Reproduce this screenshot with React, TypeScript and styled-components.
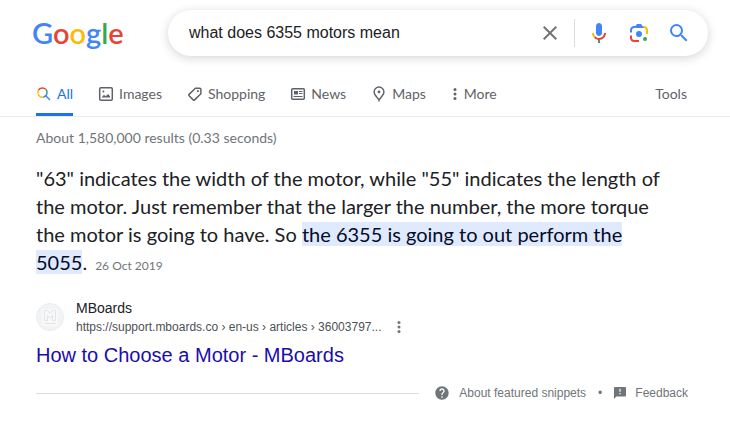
import React from 'react';
import styled, { createGlobalStyle } from 'styled-components';

const GlobalStyle = createGlobalStyle`
  *, *::before, *::after { box-sizing: border-box; }
  body {
    margin: 0;
    background: #fff;
    color: #202124;
    font-family: "Liberation Sans", Arial, sans-serif;
  }
`;

const display = 'Lato, "Open Sans", sans-serif';

const Header = styled.header`
  display: flex;
  align-items: center;
  gap: 44px;
  padding: 10px 22px 0 32px;
`;

const Logo = styled.a`
  width: 92px;
  font: 600 29px/46px ${display};
  text-decoration: none;
`;

const Letter = styled.span<{ $color: string }>`
  color: ${(p) => p.$color};
`;

const SearchBar = styled.form`
  flex: 1;
  min-width: 0;
  height: 46px;
  display: flex;
  align-items: center;
  gap: 16px;
  padding: 0 17px 0 21px;
  border-radius: 23px;
  background: #fff;
  box-shadow: 0 2px 8px 1px rgba(64, 60, 67, 0.18);
`;

const SearchInput = styled.input`
  flex: 1;
  min-width: 0;
  height: 34px;
  padding: 0;
  border: 0;
  outline: 0;
  background: transparent;
  color: #202124;
  font: 16px/24px "Liberation Sans", Arial, sans-serif;
`;

const IconButton = styled.button`
  display: flex;
  flex: none;
  padding: 0;
  border: 0;
  background: transparent;
  color: #70757a;
  cursor: pointer;
`;

const ClearBox = styled.div`
  display: flex;
  align-items: center;
  height: 28px;
  padding-right: 12px;
  margin-right: -4px;
  border-right: 1px solid #dadce0;
`;

const TabBar = styled.nav`
  display: flex;
  justify-content: space-between;
  margin-top: 22px;
  padding: 0 43px 0 36px;
  border-bottom: 1px solid #ebebeb;
  font: 14px/16px ${display};
`;

const TabList = styled.div`
  display: flex;
  gap: 25px;
`;

const Tab = styled.a<{ $active?: boolean }>`
  display: flex;
  align-items: center;
  gap: 5px;
  height: 38px;
  padding-bottom: 4px;
  border-bottom: 3px solid ${(p) => (p.$active ? '#1a73e8' : 'transparent')};
  color: ${(p) => (p.$active ? '#1a73e8' : '#5f6368')};
  text-decoration: none;
  white-space: nowrap;
`;

const Main = styled.main`
  padding: 0 42px 0 36px;
`;

const Stats = styled.div`
  padding-top: 11px;
  color: #70757a;
  font: 14px/20px ${display};
`;

const Snippet = styled.p`
  margin: 16px 0 0;
  max-width: 632px;
  font: 20px/28px ${display};
`;

const Highlight = styled.mark`
  background: #dfeaff;
  color: #040c28;
`;

const DateText = styled.span`
  margin-left: 8px;
  color: #70757a;
  font-size: 12px;
  line-height: 16px;
  white-space: nowrap;
`;

const Source = styled.div`
  display: flex;
  align-items: center;
  gap: 12px;
  margin-top: 22px;
`;

const SourceText = styled.div`
  min-width: 0;
`;

const SiteName = styled.div`
  font-size: 14px;
  line-height: 20px;
`;

const UrlRow = styled.div`
  display: flex;
  align-items: center;
  gap: 14px;
  color: #4d5156;
  font-size: 12px;
  line-height: 18px;
`;

const Title = styled.h3`
  margin: 6px 0 0;
  font-size: 20px;
  font-weight: 400;
  line-height: 26px;

  a {
    color: #1a0dab;
    text-decoration: none;
  }
`;

const Footer = styled.footer`
  display: flex;
  align-items: center;
  margin-top: 17px;
  color: #70757a;
  font-size: 12px;
  line-height: 16px;
`;

const Rule = styled.hr`
  flex: 1;
  margin: 0 15px 0 0;
  border: 0;
  border-top: 1px solid #dadce0;
`;

const FooterLink = styled.a`
  display: flex;
  align-items: center;
  gap: 9px;
  color: inherit;
  text-decoration: none;
`;

const Bullet = styled.span`
  margin: 0 12px;
`;

const wordmark: [string, string][] = [
  ['G', '#4285f4'],
  ['o', '#ea4335'],
  ['o', '#fbbc05'],
  ['g', '#4285f4'],
  ['l', '#34a853'],
  ['e', '#ea4335'],
];

const ClearIcon = () => (
  <svg width="24" height="24" viewBox="0 0 24 24" fill="currentColor" aria-hidden>
    <path d="M19 6.41L17.59 5 12 10.59 6.41 5 5 6.41 10.59 12 5 17.59 6.41 19 12 13.41 17.59 19 19 17.59 13.41 12z" />
  </svg>
);

const MicIcon = () => (
  <svg width="24" height="24" viewBox="0 0 24 24" aria-hidden>
    <path fill="#4285f4" d="m12 15c1.66 0 3-1.31 3-2.97v-7.02c0-1.66-1.34-3.01-3-3.01s-3 1.34-3 3.01v7.02c0 1.66 1.34 2.97 3 2.97z" />
    <path fill="#34a853" d="m11 18.08h2v3.92h-2z" />
    <path fill="#fbbc05" d="m7.05 16.87c-1.27-1.33-2.05-2.83-2.05-4.87h2c0 1.45 0.56 2.42 1.47 3.38v0.32l-1.15 1.18z" />
    <path fill="#ea4335" d="m12 16.93a4.97 5.25 0 0 1 -3.54 -1.55l-1.41 1.49c1.26 1.34 3.02 2.13 4.95 2.13 3.87 0 6.99-2.92 6.99-7h-1.99c0 2.92-2.24 4.93-5 4.93z" />
  </svg>
);

const LensIcon = () => (
  <svg width="24" height="24" viewBox="0 0 192 192" aria-hidden>
    <circle fill="#34a853" cx="144.07" cy="144" r="16" />
    <circle fill="#4285f4" cx="96.07" cy="104" r="24" />
    <path fill="#ea4335" d="M24,135.2c0,18.11,14.69,32.8,32.8,32.8H96v-16l-40.1-0.1c-8.8,0-15.9-8.19-15.9-17.9v-18H24V135.2z" />
    <path fill="#fbbc04" d="M168,72.8c0-18.11-14.69-32.8-32.8-32.8H116l20,16c8.8,0,16,8.29,16,18v30h16V72.8z" />
    <path fill="#4285f4" d="M112,24l-32,0L68,40H56.8C38.69,40,24,54.69,24,72.8V92h16V74c0-9.71,7.2-18,16-18h80L112,24z" />
  </svg>
);

const SearchIcon = () => (
  <svg width="24" height="24" viewBox="0 0 24 24" fill="#4285f4" aria-hidden>
    <path d="M15.5 14h-.79l-.28-.27A6.47 6.47 0 0 0 16 9.5 6.5 6.5 0 1 0 9.5 16c1.61 0 3.09-.59 4.23-1.57l.27.28v.79l5 4.99L20.49 19l-4.99-5zm-6 0C7.01 14 5 11.99 5 9.5S7.01 5 9.5 5 14 7.01 14 9.5 11.99 14 9.5 14z" />
  </svg>
);

const AllIcon = () => (
  <svg width="16" height="16" viewBox="0 0 16 16" fill="none" strokeWidth="1.5" aria-hidden>
    <path stroke="#ea4335" d="M2.5 4A4.8 4.8 0 0 1 9.8 3.3" />
    <path stroke="#34a853" d="M9.8 3.3a4.8 4.8 0 0 1 1.2 3.9" />
    <path stroke="#4285f4" d="M11 7.2a4.8 4.8 0 0 1-3.8 4" />
    <path stroke="#fbbc05" d="M7.2 11.2A4.8 4.8 0 0 1 2.5 4" />
    <path stroke="#4285f4" d="M9.8 9.8 14 14" />
  </svg>
);

const ImagesIcon = () => (
  <svg width="16" height="16" viewBox="0 0 16 16" aria-hidden>
    <rect x="1.7" y="1.7" width="12.6" height="12.6" rx="1.2" fill="none" stroke="currentColor" strokeWidth="1.5" />
    <path fill="currentColor" d="M4 11.6V11l2-2.2 1.6 1.5L10.2 8l1.9 2.6v1z" />
    <circle cx="5.4" cy="5.4" r="1" fill="currentColor" />
  </svg>
);

const TagIcon = () => (
  <svg width="16" height="16" viewBox="0 0 16 16" aria-hidden>
    <path fill="none" stroke="currentColor" strokeWidth="1.5" strokeLinejoin="round" d="M8.4 2.2h4.3c.7 0 1.2.5 1.2 1.2v4.3L7.6 13.9c-.4.4-1 .4-1.4 0L2.1 9.8c-.4-.4-.4-1 0-1.4z" />
    <circle cx="10.9" cy="5.1" r="1.1" fill="currentColor" />
  </svg>
);

const NewsIcon = () => (
  <svg width="16" height="16" viewBox="0 0 16 16" fill="none" stroke="currentColor" aria-hidden>
    <rect x="1.7" y="2.7" width="12.6" height="10.6" rx="1" strokeWidth="1.5" />
    <path strokeWidth="1" d="M9 5.5h3.5M9 7.5h3.5M3.5 10.5h9" />
    <rect x="4" y="5" width="4" height="3.5" fill="currentColor" stroke="none" />
  </svg>
);

const PinIcon = () => (
  <svg width="16" height="16" viewBox="0 0 16 16" aria-hidden>
    <path fill="none" stroke="currentColor" strokeWidth="1.4" d="M8 14.4C7.3 12.2 3.1 9.3 3.1 5.9a4.9 4.9 0 0 1 9.8 0c0 3.4-4.2 6.3-4.9 8.5z" />
    <circle cx="8" cy="5.9" r="1.4" fill="currentColor" />
  </svg>
);

const DotsIcon = () => (
  <svg width="8" height="16" viewBox="0 0 8 16" fill="currentColor" aria-hidden>
    <circle cx="4" cy="3.5" r="1.5" />
    <circle cx="4" cy="8" r="1.5" />
    <circle cx="4" cy="12.5" r="1.5" />
  </svg>
);

const SiteIcon = () => (
  <svg width="28" height="28" viewBox="0 0 28 28" aria-hidden>
    <circle cx="14" cy="14" r="13.5" fill="#f1f3f4" stroke="#eaecef" />
    <rect x="6" y="6" width="16" height="17" fill="#f8f8f8" />
    <path fill="none" stroke="#e3e5e7" d="M8.5 7.5h3l2.5 3 2.5-3h3v10h-3v-5L14 15l-2.5-2.5v5h-3zM8 20.5h12" />
  </svg>
);

const HelpIcon = () => (
  <svg width="16" height="16" viewBox="0 0 24 24" fill="currentColor" aria-hidden>
    <path d="M12 2C6.48 2 2 6.48 2 12s4.48 10 10 10 10-4.48 10-10S17.52 2 12 2zm1 17h-2v-2h2v2zm2.07-7.75-.9.92C13.45 12.9 13 13.5 13 15h-2v-.5c0-1.1.45-2.1 1.17-2.83l1.24-1.26c.37-.36.59-.86.59-1.41 0-1.1-.9-2-2-2s-2 .9-2 2H8c0-2.21 1.79-4 4-4s4 1.79 4 4c0 .88-.36 1.68-.93 2.25z" />
  </svg>
);

const FeedbackIcon = () => (
  <svg width="12" height="12" viewBox="2 2 20 20" fill="currentColor" aria-hidden>
    <path d="M20 2H4c-1.1 0-2 .9-2 2v18l4-4h14c1.1 0 2-.9 2-2V4c0-1.1-.9-2-2-2zm-7 12h-2v-2h2v2zm0-4h-2V5h2v5z" />
  </svg>
);

const tabs = [
  { label: 'All', icon: <AllIcon />, active: true },
  { label: 'Images', icon: <ImagesIcon /> },
  { label: 'Shopping', icon: <TagIcon /> },
  { label: 'News', icon: <NewsIcon /> },
  { label: 'Maps', icon: <PinIcon /> },
  { label: 'More', icon: <DotsIcon /> },
];

export default function App() {
  return (
    <>
      <GlobalStyle />
      <Header>
        <Logo href="#" aria-label="Google">
          {wordmark.map(([letter, color], i) => (
            <Letter key={i} $color={color}>{letter}</Letter>
          ))}
        </Logo>
        <SearchBar role="search" onSubmit={(e) => e.preventDefault()}>
          <SearchInput aria-label="Search" defaultValue="what does 6355 motors mean" />
          <ClearBox>
            <IconButton type="reset" aria-label="Clear"><ClearIcon /></IconButton>
          </ClearBox>
          <IconButton type="button" aria-label="Search by voice"><MicIcon /></IconButton>
          <IconButton type="button" aria-label="Search by image"><LensIcon /></IconButton>
          <IconButton type="submit" aria-label="Submit search"><SearchIcon /></IconButton>
        </SearchBar>
      </Header>
      <TabBar>
        <TabList>
          {tabs.map((t) => (
            <Tab key={t.label} href="#" $active={t.active}>
              {t.icon}
              {t.label}
            </Tab>
          ))}
        </TabList>
        <Tab href="#">Tools</Tab>
      </TabBar>
      <Main>
        <Stats>About 1,580,000 results (0.33 seconds)</Stats>
        <Snippet>
          "63" indicates the width of the motor, while "55" indicates the length of the motor. Just
          remember that the larger the number, the more torque the motor is going to have. So{' '}
          <Highlight>the 6355 is going to out perform the 5055</Highlight>.
          <DateText>26 Oct 2019</DateText>
        </Snippet>
        <Source>
          <SiteIcon />
          <SourceText>
            <SiteName>MBoards</SiteName>
            <UrlRow>
              https://support.mboards.co › en-us › articles › 36003797...
              <IconButton type="button" aria-label="About this result"><DotsIcon /></IconButton>
            </UrlRow>
          </SourceText>
        </Source>
        <Title><a href="#">How to Choose a Motor - MBoards</a></Title>
        <Footer>
          <Rule />
          <FooterLink href="#"><HelpIcon />About featured snippets</FooterLink>
          <Bullet>•</Bullet>
          <FooterLink href="#"><FeedbackIcon />Feedback</FooterLink>
        </Footer>
      </Main>
    </>
  );
}
